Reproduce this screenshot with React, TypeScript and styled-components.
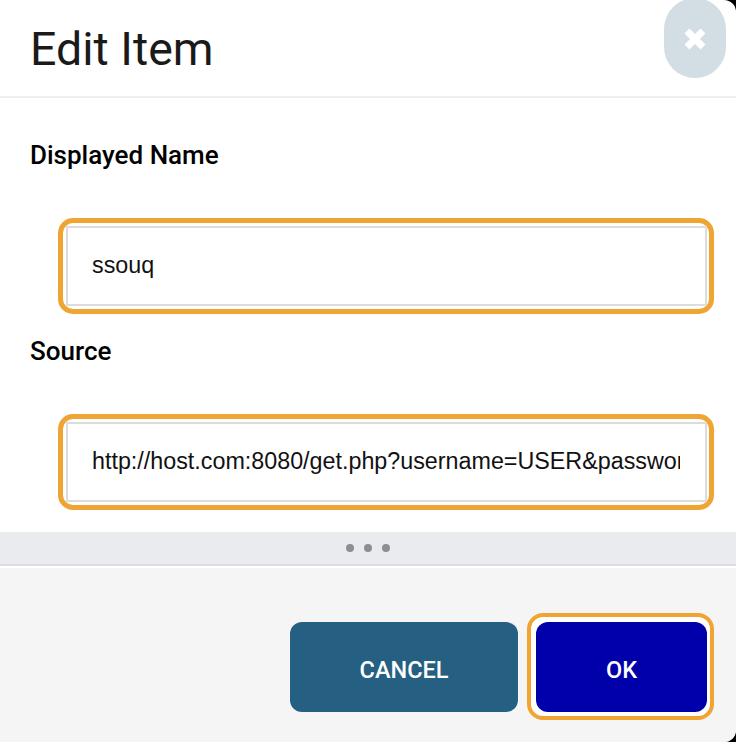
import React from "react";
import styled, { createGlobalStyle } from "styled-components";

const Global = createGlobalStyle`
  html, body { margin: 0; padding: 0; background: #000; }
  * { box-sizing: border-box; }
`;

const Dialog = styled.div`
  position: relative;
  width: 736px;
  height: 742px;
  background: #fff;
  border-radius: 0 12px 12px 0;
  overflow: hidden;
  display: flex;
  flex-direction: column;
  font-family: Roboto, sans-serif;
`;

const Header = styled.header`
  height: 98px;
  flex: none;
  padding: 22px 30px 0;
  border-bottom: 2px solid #eeeeee;
`;

const Title = styled.h1`
  margin: 0;
  font-size: 46.5px;
  line-height: 54px;
  font-weight: 400;
  color: #1a1a1a;
`;

const CloseButton = styled.button`
  position: absolute;
  top: -2px;
  left: 664px;
  width: 62px;
  height: 80px;
  padding: 2px 0 0;
  border: 0;
  border-radius: 31px;
  background: #d2dde4;
  display: flex;
  align-items: center;
  justify-content: center;
`;

const Body = styled.main`
  flex: 1;
  padding: 39px 22px 0 30px;
`;

const Field = styled.section`
  height: 196px;
  display: flex;
  flex-direction: column;
`;

const Label = styled.label`
  font-size: 26px;
  line-height: 36px;
  font-weight: 500;
  color: #000;
  margin-bottom: 44px;
`;

const Ring = styled.div`
  margin-left: 28px;
  margin-top: 1px;
  height: 96px;
  padding: 3px 2px 3px 3px;
  border: 5px solid #f0a432;
  border-radius: 15px;
`;

const Input = styled.input`
  display: block;
  width: 100%;
  height: 100%;
  padding: 0 25px 2px 24px;
  border: 2px solid #dcdcdc;
  background: #fff;
  outline: none;
  font-family: "Liberation Sans", Arial, sans-serif;
  font-size: 23.3px;
  color: #111;
`;

const Handle = styled.div`
  height: 34px;
  flex: none;
  background: #e9ebee;
  border-bottom: 2px solid #dcdde0;
  display: flex;
  align-items: center;
  justify-content: center;
  gap: 10px;
`;

const Dot = styled.span`
  width: 8px;
  height: 8px;
  border-radius: 50%;
  background: #8b8e92;
`;

const Footer = styled.footer`
  height: 174px;
  flex: none;
  margin-top: 2px;
  background: #f5f5f5;
  padding: 54px 22px 0 0;
  display: flex;
  justify-content: flex-end;
  align-items: flex-start;
`;

const ActionButton = styled.button<{ $bg: string; $w: number }>`
  width: ${(p) => p.$w}px;
  height: 90px;
  border: 0;
  border-radius: 12px;
  background: ${(p) => p.$bg};
  color: #fff;
  font-family: Roboto, sans-serif;
  font-size: 23.5px;
  font-weight: 500;
  text-transform: uppercase;
  padding: 6px 0 0;
`;

const ButtonRing = styled.div`
  margin-left: 9px;
  margin-top: -9px;
  padding: 5px 3px 4px 5px;
  border: 4px solid #f0a432;
  border-radius: 16px;
  background: #fff;
  display: flex;
`;

export default function App() {
  return (
    <>
      <Global />
      <Dialog>
        <Header>
          <Title>Edit Item</Title>
        </Header>
        <CloseButton aria-label="Close">
          <svg width="22" height="22" viewBox="0 0 22 22">
            <path d="M3 3 L19 19 M19 3 L3 19" stroke="#fff" strokeWidth="7" strokeLinecap="butt" />
          </svg>
        </CloseButton>
        <Body>
          <Field>
            <Label>Displayed Name</Label>
            <Ring>
              <Input readOnly value="ssouq" />
            </Ring>
          </Field>
          <Field>
            <Label>Source</Label>
            <Ring>
              <Input readOnly value="http://host.com:8080/get.php?username=USER&password=PASS&type=m3u" />
            </Ring>
          </Field>
        </Body>
        <Handle>
          <Dot />
          <Dot />
          <Dot />
        </Handle>
        <Footer>
          <ActionButton $bg="#255f82" $w={228}>Cancel</ActionButton>
          <ButtonRing>
            <ActionButton $bg="#0000aa" $w={171}>OK</ActionButton>
          </ButtonRing>
        </Footer>
      </Dialog>
    </>
  );
}
